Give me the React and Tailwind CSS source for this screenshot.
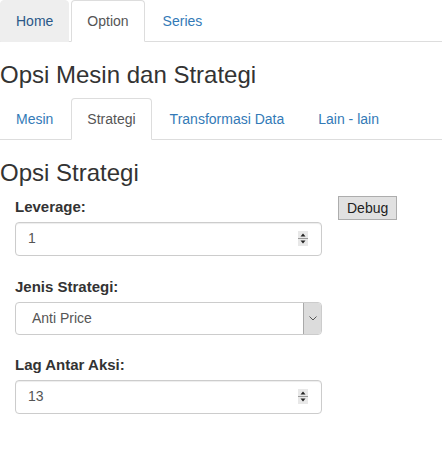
import React from 'react'

const font = { fontFamily: '"Liberation Sans", Arial, sans-serif' }

function Tabs({ items, active, hover }) {
  return (
    <ul className="flex border-b border-[#ddd] h-[42px]">
      {items.map((t) => (
        <li key={t} className="-mb-px mr-[2px]">
          <a
            className={
              'block px-[15px] py-[10px] leading-[20px] text-[14px] border rounded-t-[4px] cursor-pointer ' +
              (t === active
                ? 'bg-white text-[#555] border-[#ddd] border-b-transparent'
                : t === hover
                ? 'bg-[#eee] text-[#2a5888] border-[#eee]'
                : 'text-[#337ab7] border-transparent')
            }
          >
            {t}
          </a>
        </li>
      ))}
    </ul>
  )
}

function Spinner() {
  return (
    <svg width="10" height="15" viewBox="0 0 10 15" className="shrink-0">
      <rect x="0" y="0" width="10" height="15" fill="#e8e8e8" />
      <line x1="0" y1="7.5" x2="10" y2="7.5" stroke="#9a9a9a" strokeWidth="1" />
      <path d="M2.5 5.5 L5 2.5 L7.5 5.5 Z" fill="#222" />
      <path d="M2.5 9.5 L7.5 9.5 L5 12.5 Z" fill="#222" />
    </svg>
  )
}

function NumberInput({ value }) {
  return (
    <div className="h-[34px] w-[307px] border border-[#ccc] rounded-[4px] shadow-[inset_0_1px_1px_rgba(0,0,0,0.075)] flex items-center pl-[12px] pr-[13px] text-[14px] text-[#555]">
      <span className="flex-1">{value}</span>
      <Spinner />
    </div>
  )
}

function Label({ children }) {
  return <label className="block text-[15px] font-bold leading-[20px] text-[#333] mb-[5px]">{children}</label>
}

export default function App() {
  return (
    <div style={font} className="w-[442px] h-[449px] bg-white text-[#333] text-[14px] overflow-hidden">
      <Tabs items={['Home', 'Option', 'Series']} active="Option" hover="Home" />
      <h3 className="text-[24px] leading-[1.1] font-normal mt-[20px] mb-[10px] text-[#333]">Opsi Mesin dan Strategi</h3>
      <Tabs items={['Mesin', 'Strategi', 'Transformasi Data', 'Lain - lain']} active="Strategi" />
      <h3 className="text-[24px] leading-[1.1] font-normal mt-[20px] mb-[10px] text-[#333]">Opsi Strategi</h3>
      <div className="flex">
        <div className="pl-[15px] w-[322px]">
          <div className="mb-[21px]">
            <Label>Leverage:</Label>
            <NumberInput value="1" />
          </div>
          <div className="mb-[20px]">
            <Label>Jenis Strategi:</Label>
            <div className="h-[33px] w-[307px] border border-[#ccc] rounded-[4px] flex items-stretch text-[14px] text-[#555] overflow-hidden">
              <span className="flex-1 flex items-center pl-[16px]">Anti Price</span>
              <div className="w-[18px] bg-[#dcdcdc] border-l border-[#a9a9a9] flex items-center justify-center">
                <svg width="8" height="5" viewBox="0 0 8 5">
                  <path d="M0.5 0.5 L4 4 L7.5 0.5" fill="none" stroke="#555" strokeWidth="1" />
                </svg>
              </div>
            </div>
          </div>
          <div>
            <Label>Lag Antar Aksi:</Label>
            <NumberInput value="13" />
          </div>
        </div>
        <div className="pl-[16px] -mt-px">
          <button className="h-[24px] px-[8px] bg-[#e1e1e1] border border-[#adadad] text-[14px] text-[#222] leading-[20px]">
            Debug
          </button>
        </div>
      </div>
    </div>
  )
}
